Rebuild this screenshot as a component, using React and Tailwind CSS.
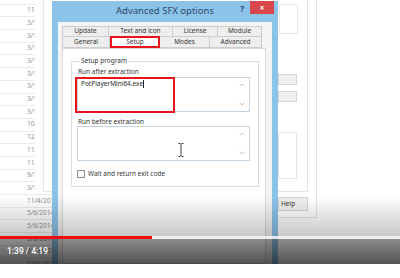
import React from "react";

const dates = [
  "3/17/2014", "11/4/2014", "3/17/2014", "3/17/2014", "3/17/2014", "3/17/2014",
  "3/17/2014", "3/17/2014", "3/17/2014", "3/17/2014", "10/2/2014", "12/1/2014",
  "11/4/2014", "11/4/2014", "9/12/2014", "3/17/2014", "11/4/2014", "5/6/2014",
  "5/6/2014", "5/6/2014", "3/17/2014", "12/1/2014",
];

function Chevrons() {
  return (
    <div className="flex flex-col justify-between h-full pt-[5px] pb-[5px] pr-[4px]">
      <svg width="6" height="4" viewBox="0 0 6 4">
        <polyline points="0.5,3.5 3,1 5.5,3.5" fill="none" stroke="#c4c4c4" strokeWidth="1" />
      </svg>
      <svg width="6" height="4" viewBox="0 0 6 4">
        <polyline points="0.5,0.5 3,3 5.5,0.5" fill="none" stroke="#c4c4c4" strokeWidth="1" />
      </svg>
    </div>
  );
}

export default function App() {
  return (
    <div className="w-[400px] h-[278px] bg-white font-['Noto_Sans',sans-serif] overflow-hidden">
      <div className="relative w-[400px] h-[264px] overflow-hidden bg-white">
        <div className="flex h-full">
          {/* background file list */}
          <div className="relative w-[52px] h-full overflow-hidden bg-white">
            <div className="flex flex-col -mt-[8px]">
              {dates.map((d, i) => (
                <div
                  key={i}
                  className="h-[12.7px] shrink-0 border-b border-[#ebebeb] pl-[27px] flex items-center text-[6.5px] leading-none text-[#8d8d8d] whitespace-nowrap"
                >
                  {d}
                </div>
              ))}
            </div>
            <div className="absolute left-[35px] top-0 w-[17px] h-[192px] bg-white">
              <div className="ml-[8px] h-full border-l border-b border-[#e6e6e6]" />
            </div>
          </div>

          {/* dialog */}
          <div className="w-[226px] mt-[1px] bg-[#8cc3e9] px-[6px] flex flex-col">
            <div className="h-[21px] grid grid-cols-[1fr_auto_1fr] items-start">
              <div />
              <div className="h-[21px] flex items-center text-[9.5px] text-[#2d4a68] whitespace-nowrap">
                Advanced SFX options
              </div>
              <div className="flex justify-end items-start gap-[6px] -mr-[2px]">
                <span className="text-[8px] font-bold text-[#1d3d63] leading-none mt-[4px]">?</span>
                <div className="w-[24px] h-[13px] bg-[#d9474a] flex items-center justify-center text-white text-[8px] font-bold leading-none">
                  ×
                </div>
              </div>
            </div>

            <div className="flex-1 bg-[#f4f4f4] pt-[4px] pl-[4px] pr-[6px] flex flex-col text-[#363636]">
              {/* tab rows */}
              <div className="flex h-[11px] w-[200px] text-[6.5px] leading-none">
                <div className="w-[47px] border border-[#cdcdcd] bg-[#eeeeee] flex items-center justify-center">Update</div>
                <div className="w-[64px] border border-l-0 border-[#cdcdcd] bg-[#eeeeee] flex items-center justify-center">Text and icon</div>
                <div className="w-[45px] border border-l-0 border-[#cdcdcd] bg-[#eeeeee] flex items-center justify-center">License</div>
                <div className="w-[44px] border border-l-0 border-[#cdcdcd] bg-[#eeeeee] flex items-center justify-center">Module</div>
              </div>
              <div className="flex items-end h-[11px] w-[200px] text-[6.5px] leading-none">
                <div className="w-[48px] h-[11px] border border-t-0 border-[#cdcdcd] bg-[#eeeeee] flex items-center justify-center">General</div>
                <div className="w-[50px] h-[12px] border-2 border-[#e8141d] bg-white flex items-center justify-center">Setup</div>
                <div className="w-[50px] h-[11px] border border-t-0 border-l-0 border-[#cdcdcd] bg-[#eeeeee] flex items-center justify-center">Modes</div>
                <div className="w-[52px] h-[11px] border border-t-0 border-l-0 border-[#cdcdcd] bg-[#eeeeee] flex items-center justify-center">Advanced</div>
              </div>

              {/* tab page */}
              <div className="flex-1 w-[204px] bg-white border border-[#d8d8d8] pl-[8px] pt-[8px]">
                <fieldset className="w-[188px] h-[130px] border border-[#dcdcdc] pl-[5px] pr-[8px]">
                  <legend className="ml-[3px] px-[1px] text-[6.5px] leading-[8px]">Setup program</legend>
                  <div className="mt-[3px] pl-[1px] text-[6.5px] leading-[8px]">Run after extraction</div>
                  <div className="relative mt-[1px] h-[35px] border border-[#c5d4e1] bg-white flex justify-between">
                    <div className="pl-[3px] pt-[2px] text-[6.5px] leading-[8px] text-[#2e2e2e] flex items-start">
                      PotPlayerMini64.exe
                      <span className="inline-block w-[1px] h-[8px] bg-[#222]" />
                    </div>
                    <Chevrons />
                    <div className="absolute -left-[3px] -top-[1px] w-[100px] h-[36px] border-2 border-[#e8141d]" />
                  </div>
                  <div className="mt-[6px] pl-[1px] text-[6.5px] leading-[8px]">Run before extraction</div>
                  <div className="relative mt-[0px] h-[35px] border border-[#c5d4e1] bg-white flex justify-end">
                    <Chevrons />
                    <svg className="absolute left-[100px] top-[16px]" width="6" height="14" viewBox="0 0 6 14">
                      <path d="M0.5 0.5 H2.5 M3.5 0.5 H5.5 M3 1 V13 M0.5 13.5 H2.5 M3.5 13.5 H5.5" stroke="#3a3a3a" strokeWidth="1" fill="none" />
                    </svg>
                  </div>
                  <div className="mt-[9px] flex items-center gap-[3px]">
                    <div className="w-[8px] h-[8px] border border-[#8f8f8f] bg-white" />
                    <span className="text-[6.5px] leading-[8px]">Wait and return exit code</span>
                  </div>
                </fieldset>
              </div>
            </div>
          </div>

          {/* main window behind, right side */}
          <div className="flex-1 bg-white">
            <div className="w-[39px] h-[218px] border-r border-b border-[#e4e4e4]">
              <div className="w-[30px] h-[192px] border-r border-b border-[#e4e4e4] pt-[4px] flex flex-col">
                <div className="w-[19px] h-[30px] ml-[1px] border border-[#e8e8e8]" />
                <div className="w-[19px] h-[11px] mt-[40px] bg-[#f0f0f0] border border-[#d5d5d5]" />
                <div className="w-[19px] h-[11px] mt-[6px] bg-[#f0f0f0] border border-[#d5d5d5]" />
                <div className="w-[19px] h-[47px] mt-[30px] border border-[#e6e6e6]" />
              </div>
              <div className="mt-[5px] w-[30px] h-[14px] bg-[#f0f0f0] border border-[#d5d5d5] pl-[2px] flex items-center text-[6.5px] leading-none text-[#333]">
                Help
              </div>
            </div>
          </div>
        </div>

        {/* player overlay */}
        <div className="absolute left-0 right-0 top-[196px] h-[40px] bg-gradient-to-b from-[rgba(0,0,0,0)] to-[rgba(0,0,0,0.22)]" />
        <div className="absolute left-0 right-0 top-[236px] h-[3px] flex">
          <div className="w-[152px] h-full bg-[#f20d0d]" />
          <div className="flex-1 h-full bg-[rgba(235,235,235,0.85)]" />
        </div>
        <div className="absolute left-0 right-0 top-[239px] bottom-0 bg-gradient-to-b from-[rgba(0,0,0,0.45)] to-[rgba(0,0,0,0.68)] flex items-center pl-[7px]">
          <span className="text-white text-[8.5px] font-medium font-['Roboto',sans-serif] leading-none whitespace-nowrap">
            1:39 / 4:19
          </span>
        </div>
      </div>
      <div className="h-[14px] bg-white" />
    </div>
  );
}
